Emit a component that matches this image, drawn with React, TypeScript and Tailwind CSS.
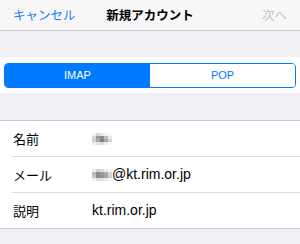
const font = { fontFamily: '"Noto Sans CJK JP", "Liberation Sans", sans-serif' };
const latin = { fontFamily: '"Liberation Sans", sans-serif' };

function Mosaic({ cells }: { cells: string[][] }) {
  return (
    <div className="flex flex-col">
      {cells.map((row, i) => (
        <div key={i} className="flex">
          {row.map((c, j) => (
            <div key={j} className="h-[3px] w-[4px]" style={{ backgroundColor: c }} />
          ))}
        </div>
      ))}
    </div>
  );
}

const nameMosaic = [
  ['#f2f2f2', '#d8d8d8', '#e6e6e6', '#f4f4f4', '#fafafa'],
  ['#d6d6d6', '#9a9a9a', '#8c8c8c', '#bdbdbd', '#e8e8e8'],
  ['#cfcfcf', '#a8a8a8', '#7e7e7e', '#a6a6a6', '#d4d4d4'],
  ['#f0f0f0', '#e4e4e4', '#dcdcdc', '#ececec', '#f8f8f8'],
];

const mailMosaic = [
  ['#e9e9e9', '#d0d0d0', '#dcdcdc', '#ebebeb', '#f2f2f2'],
  ['#b9b9b9', '#8e8e8e', '#9c9c9c', '#a9a9a9', '#d6d6d6'],
  ['#c4c4c4', '#8a8a8a', '#939393', '#a2a2a2', '#cfcfcf'],
  ['#efefef', '#dedede', '#e2e2e2', '#e8e8e8', '#f5f5f5'],
];

function Row({ label, children }: { label: string; children: React.ReactNode }) {
  return (
    <div className="h-[35px] flex items-center pl-[13px]">
      <span className="w-[79px] text-[13px] text-black">{label}</span>
      {children}
    </div>
  );
}

export default function App() {
  return (
    <div className="w-[300px] h-[244px] bg-[#efeff4] overflow-hidden" style={font}>
      {/* Nav bar */}
      <div className="h-[31px] bg-[#f7f7f7] border-b border-[#c8c7cc] flex items-center justify-between px-[13px] text-[12.5px]">
        <span className="text-[#147efb] w-[70px]">キャンセル</span>
        <span className="font-bold text-black">新規アカウント</span>
        <span className="text-[#c4c4c9] w-[70px] text-right">次へ</span>
      </div>

      {/* Segmented control */}
      <div className="mt-[26px] bg-white h-[36px] flex items-center px-[4px]">
        <div className="flex w-full h-[25px] rounded-[4px] border border-[#007aff] overflow-hidden text-[11px]" style={latin}>
          <div className="flex-1 bg-[#007aff] text-white flex items-center justify-center">IMAP</div>
          <div className="flex-1 bg-white text-[#007aff] flex items-center justify-center">POP</div>
        </div>
      </div>

      {/* Form table */}
      <div className="mt-[27px] bg-white border-y border-[#c8c7cc]">
        <Row label="名前">
          <Mosaic cells={nameMosaic} />
        </Row>
        <div className="ml-[12px] h-px bg-[#dcdbe0]" />
        <Row label="メール">
          <Mosaic cells={mailMosaic} />
          <span className="text-[14px] text-black" style={latin}>@kt.rim.or.jp</span>
        </Row>
        <div className="ml-[12px] h-px bg-[#dcdbe0]" />
        <Row label="説明">
          <span className="text-[14px] text-black" style={latin}>kt.rim.or.jp</span>
        </Row>
      </div>
    </div>
  );
}
